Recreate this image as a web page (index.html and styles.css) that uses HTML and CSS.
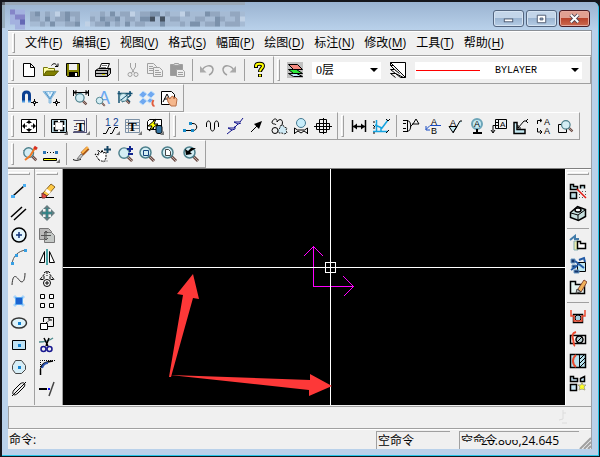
FILE: index.html
```html
<!DOCTYPE html>
<html lang="zh-CN">

<head>
    <meta charset="UTF-8">
    <meta name="viewport" content="width=device-width, initial-scale=1.0">
    <title>CAD</title>
    <link rel="stylesheet" href="styles.css">
</head>

<body>
    <!-- shared icon parts -->
    <svg class="defs" aria-hidden="true">
        <symbol id="lens" viewBox="0 0 18 18">
            <path d="M11 11l5 5" stroke="#6b4a42" stroke-width="3" />
            <path d="M11 11l5 5" stroke="#b9a9a5" />
            <circle cx="7.500" cy="7.500" r="5.500" fill="#d3edf4" stroke="#4c7f8b" stroke-width="1.500" />
        </symbol>
        <symbol id="dd" viewBox="0 0 18 18">
            <path d="M18 14v4h-4z" fill="#777" stroke="none" />
        </symbol>
    </svg>

    <div class="window">
        <header class="titlebar">
            <svg class="mosaic" width="246" height="28" aria-hidden="true">
                <path d="M0 0h243v3h-243z" fill="#9aa9b9" />
                <path d="M0 0h3v26h-3z" fill="#98aebe" />
                <path d="M0 0h3v3h-3z" fill="#626970" />
                <g fill="none" stroke-width="5">
                    <path d="M8 10h15M8 15h15M8 20h15M13 25h10" stroke="#a3b1df" />
                    <path d="M8 10h5M13 15h5M18 15h5M18 20h5" stroke="#8585c8" />
                    <path d="M18 20h5" stroke="#6469b4" />
                    <path d="M28 12h50M88 12h155M28 17h50M88 17h155M28 22h50M88 22h155" stroke="#a6bbd4" />
                    <path d="M28 12h5M43 12h5M58 12h5M68 12h10M98 12h5M118 12h10M138 12h10M163 12h5M183 12h5M208 12h10M228 12h10M28 17h10M53 17h10M73 17h5M88 17h5M103 17h10M123 17h10M168 17h10M193 17h10M218 17h5M233 17h5M38 22h5M63 22h10M93 22h10M113 22h5M133 22h10M178 22h5M203 22h10M223 22h15" stroke="#93a7c0" />
                    <path d="M33 12h5M63 12h5M108 12h5M148 12h10M203 12h5M43 17h5M63 17h5M98 17h5M113 17h5M138 17h10M158 17h5M213 17h5M48 22h5M73 22h5M103 22h5M123 22h5M158 22h5M188 22h10M213 22h5" stroke="#7b91ab" />
                    <path d="M148 17h5M158 17h5" stroke="#465362" />
                    <path d="M53 12h5M128 12h5M178 12h5M238 17h5M83 22h5" stroke="#c0d1e5" />
                </g>
            </svg>
            <div class="win-bttns">
                <button type="button" class="win-bttn" aria-label="最小化"><svg viewBox="0 0 30 16"><rect x="10.500" y="8.500" width="9" height="3" fill="#fff" stroke="#4d5a70" /></svg></button>
                <button type="button" class="win-bttn" aria-label="最大化"><svg viewBox="0 0 30 16"><path d="M10.500 4.500h9v8h-9zM13.500 7.500h3v2h-3z" fill="#fff" fill-rule="evenodd" stroke="#4d5a70" /></svg></button>
                <button type="button" class="win-bttn win-close" aria-label="关闭"><svg viewBox="0 0 30 16"><path d="M11 4l8 8M19 4l-8 8" stroke="#4d4654" stroke-width="4" /><path d="M11 4l8 8M19 4l-8 8" stroke="#fff" stroke-width="2" /></svg></button>
            </div>
        </header>

        <div class="client">
            <nav class="menubar" aria-label="菜单">
                <button type="button">文件(<u>F</u>)</button>
                <button type="button">编辑(<u>E</u>)</button>
                <button type="button">视图(<u>V</u>)</button>
                <button type="button">格式(<u>S</u>)</button>
                <button type="button">幅面(<u>P</u>)</button>
                <button type="button">绘图(<u>D</u>)</button>
                <button type="button">标注(<u>N</u>)</button>
                <button type="button">修改(<u>M</u>)</button>
                <button type="button">工具(<u>T</u>)</button>
                <button type="button">帮助(<u>H</u>)</button>
            </nav>

            <!-- toolbars -->
            <div class="bar-row">
                <div class="toolbar">
                    <button type="button" class="tool" aria-label="新建"><svg viewBox="0 0 18 18"><path d="M3.500 2.500h7l4 4v9h-11zM10.500 2.500v4h4" fill="#fff" /></svg></button>
                    <button type="button" class="tool" aria-label="打开"><svg viewBox="0 0 18 18"><path d="M1.500 14.500v-8h4l1 1h6v3" fill="#ffffa0" stroke="#77770c" /><path d="M1.500 14.500l3-4.500h12l-4 4.500z" fill="#808000" stroke="#5b5b00" /><path d="M9.500 4.500c2-3 5-2 5.500 1M13 5.500h3v-3" /></svg></button>
                    <button type="button" class="tool" aria-label="保存"><svg viewBox="0 0 18 18"><path d="M2.500 2.500h13v13h-12l-1-1z" fill="#808000" /><path d="M5 3h8v6H5z" fill="#f0f0f0" stroke="none" /><path d="M5 11h9v5H5z" fill="#000" stroke="none" /><path d="M11 12h2v3h-2z" fill="#fff" stroke="none" /></svg></button>
                    <i class="sep"></i>
                    <button type="button" class="tool" aria-label="打印"><svg viewBox="0 0 18 18"><path d="M5.500 7.500l2-5h8l-2 5" fill="#fff" /><path d="M8 4.500h5M7 6.500h5" stroke="#777" /><path d="M1.500 9.500l3-2h12v5l-3 3h-12z" fill="#bbb" /><path d="M1.500 9.500h12v6M13.500 9.500l3-2M2 12.500h11" /><path d="M8 13.500h3" stroke="#cc0" /></svg></button>
                    <i class="sep"></i>
                    <button type="button" class="tool off" aria-label="剪切"><svg viewBox="0 0 18 18"><path d="M6.500 2v4l4 6M11.500 2v4l-4 6" /><circle cx="6" cy="13.500" r="2" /><circle cx="12" cy="13.500" r="2" /></svg></button>
                    <button type="button" class="tool off" aria-label="复制"><svg viewBox="0 0 18 18"><path d="M1.500 2.500h6l3 3v7h-9zM3 5.500h4M3 7.500h5M3 9.500h4" fill="#eee" /><path d="M7.500 6.500h6l3 3v6h-9zM9 9.500h4M9 11.500h6M9 13.500h6" fill="#eee" /></svg></button>
                    <button type="button" class="tool off" aria-label="粘贴"><svg viewBox="0 0 18 18"><path d="M2.500 3.500h12v11h-12z" fill="#999" /><path d="M5.500 4.500l1-2h4l1 2z" fill="#ddd" /><path d="M8.500 8.500h6l2 2v5h-8zM10 11.500h5M10 13.500h5" fill="#eee" /></svg></button>
                    <i class="sep"></i>
                    <button type="button" class="tool off" aria-label="撤销"><svg viewBox="0 0 18 18"><path d="M4 10c2-6 10-7 11-2 0 3-2 5-4 6" stroke-width="1.500" /><path d="M2 5v6.500h6.500z" fill="#aaa" stroke="none" /></svg></button>
                    <button type="button" class="tool off" aria-label="重做"><svg viewBox="0 0 18 18"><path d="M14 10C12 4 4 3 3 8c0 3 2 5 4 6" stroke-width="1.500" /><path d="M16 5v6.500H9.500z" fill="#aaa" stroke="none" /></svg></button>
                    <i class="sep"></i>
                    <button type="button" class="tool" aria-label="帮助"><svg viewBox="0 0 18 18"><path d="M6 7V5c0-3 7-3 7 0 0 2-3 3-3 6M10 13v3" stroke-width="4" /><path d="M6 6V5c0-3 7-3 7 0 0 2-3 3-3 5.500M10 13.500v2" stroke="#ff0" stroke-width="2" /></svg></button>
                </div>
                <div class="toolbar grow">
                    <button type="button" class="tool" aria-label="图层"><svg viewBox="0 0 18 18"><path d="M1 1h16v16H1z" fill="#c0c0c0" stroke="none" /><path d="M2.500 12.500h8l6 3h-9z" fill="#bfe6f8" /><path d="M2.500 8.500h8l6 4h-9z" fill="#2bea38" /><path d="M2.500 3.500h9l5 5h-9z" fill="#f58a80" /></svg></button>
                    <span class="combo layer"><select aria-label="当前图层"><option>0层</option></select></span>
                    <button type="button" class="tool" aria-label="线型"><svg viewBox="0 0 18 18"><path d="M1.500 1.500h15v15z" fill="#fff" /><path d="M1.500 4.500h3l4 4M1.500 8.500h4l5 4M1.500 12.500h5l8 4M1.500 1.500v3l4 4M1.500 8.500l10 8h5M1.500 12.500l5 4" /></svg></button>
                    <span class="combo linetype"><select aria-label="线型选择"><option>BYLAYER</option></select></span>
                </div>
            </div>

            <div class="bar-row">
                <div class="toolbar">
                    <button type="button" class="tool" aria-label="捕捉"><svg viewBox="0 0 18 18"><path d="M3.500 13V6c0-4 6-4 6 0v7" stroke="#0b3f91" stroke-width="3" /><path d="M2 12.500h3M8 12.500h3" stroke="#4b97de" stroke-width="2" /><path d="M14.500 10v7M11 13.500h7" /><path d="M13.500 12.500h2v2h-2z" fill="#fff" /></svg></button>
                    <button type="button" class="tool" aria-label="过滤"><svg viewBox="0 0 18 18"><path d="M1 2.500h13L9 10v4H7v-4z" fill="#a5d2ef" stroke="#8dbbdd" /><path d="M3 3l5 7M12 3l-4 7" stroke="#4d8ec2" /><path d="M6 3l2 4 2-4" stroke="#fff" /><path d="M14.500 10v7M11 13.500h7" /><path d="M13.500 12.500h2v2h-2z" fill="#fff" /></svg></button>
                    <i class="sep"></i>
                    <button type="button" class="tool" aria-label="测距"><svg viewBox="0 0 18 18"><path d="M1.500 1v6M16.500 1v6M2 3.500h14M4 1.500v4l-2-2zM14 1.500v4l2-2z" /><use href="#lens" x="2" y="3" width="14" height="14" /></svg></button>
                    <button type="button" class="tool" aria-label="查找文字"><svg viewBox="0 0 18 18"><text class="glyph sky" x="4" y="15" font-size="18">A</text><use href="#lens" x="1" y="7" width="11" height="11" /></svg></button>
                    <button type="button" class="tool" aria-label="检查"><svg viewBox="0 0 18 18"><path d="M1.500 4.500h15M3 2v12M14 2v6M5 4l9 9M15 6l-9 7" stroke="#155273" stroke-width="1.500" /><use href="#lens" x="2" y="3" width="13" height="13" /><path d="M5 11L15 3" stroke="#155273" /></svg></button>
                    <button type="button" class="tool" aria-label="块"><svg viewBox="0 0 18 18"><path d="M5 2l4 3-4 4-4-3zM13 2l4 3-4 4-4-3zM5 9l4 3-4 4-4-3zM12 9l3 2-3 3-3-2z" fill="#70a8f0" stroke="#b9dcfa" /><path d="M15.500 11c-2 3-1 6 1 6" stroke="#e05c3d" stroke-width="2" /></svg></button>
                    <button type="button" class="tool" aria-label="特性"><svg viewBox="0 0 18 18"><path d="M1.500 2.500h10l3 3v10h-13z" fill="#fff" /><path d="M3 13L7 5l3 6M4 10h4" /><path d="M7 8l1 5 3 4h5l1-7-2-2-1 2-1-3-2 1-1 2z" fill="#f5b78c" stroke="#b86f47" /></svg></button>
                </div>
            </div>

            <div class="bar-row">
                <div class="toolbar">
                    <button type="button" class="tool" aria-label="图幅设置"><svg viewBox="0 0 18 18"><path d="M1.500 2.500h15v13h-15z" fill="#fff" /><path d="M9 3l3 3H6zM9 15l3-3H6zM2 9l3-3v6zM16 9l-3-3v6z" fill="#000" stroke="none" /><path d="M9 5v2M9 11v2M5 9h2M11 9h2" /></svg></button>
                    <i class="sep"></i>
                    <button type="button" class="tool" aria-label="图框"><svg viewBox="0 0 18 18"><path d="M1.500 2.500h15v13h-15z" fill="#b8d7e2" /><path d="M4.500 4.500h9v9h-9z" fill="#fff" stroke-width="1.500" /><path d="M8 4h2M8 14h2M4 8v2M14 8v2" stroke="#fff" stroke-width="2" /><use href="#dd" width="18" height="18" /></svg></button>
                    <button type="button" class="tool" aria-label="标题栏"><svg viewBox="0 0 18 18"><path d="M1.500 3.500h11v11h-11M14.500 1v14M1 15.500h14M2 12.500h3M2 9.500h3" stroke="#557" /><text class="glyph serif" x="4" y="14" font-size="13" font-weight="bold">T</text><use href="#dd" width="18" height="18" /></svg></button>
                    <i class="sep"></i>
                    <button type="button" class="tool" aria-label="序号"><svg viewBox="0 0 18 18"><text class="glyph navy" x="3" y="9" font-size="10">1</text><text class="glyph navy" x="11" y="9" font-size="10">2</text><path d="M1 16.500h3l3-6h2M8 16.500h2l3-6h3" /><use href="#dd" width="18" height="18" /></svg></button>
                    <button type="button" class="tool" aria-label="明细表"><svg viewBox="0 0 18 18"><path d="M1.500 2.500h14v13h-14zM1 5.500h15M1 8.500h15M1 11.500h15M4.500 3v12" stroke="#7d91a5" /><text class="glyph serif" x="4" y="14" font-size="13" font-weight="bold">T</text><use href="#dd" width="18" height="18" /></svg></button>
                    <button type="button" class="tool" aria-label="数据"><svg viewBox="0 0 18 18"><path d="M1.500 4.500l2-2h12v10h-14zM1 8.500h14M7.500 3v10" fill="#fff" /><path d="M10 2L2 9h4l-3 5 9-7H8z" fill="#ff0" /><path d="M10 10c0-2 6-2 6 0v5c0 2-6 2-6 0z" fill="#3575a2" /><use href="#dd" width="18" height="18" /></svg></button>
                </div>
                <div class="toolbar">
                    <button type="button" class="tool" aria-label="多段线"><svg viewBox="0 0 18 18"><path d="M2 13.500h9c5 0 5-7 0-7H8" /><path d="M1 12h3v3H1zM7 5h3v3H7zM9 12h3v3H9z" fill="#168cc9" stroke="none" /></svg></button>
                    <button type="button" class="tool" aria-label="波浪线"><svg viewBox="0 0 18 18"><path d="M2.500 10V7c0-4 4-4 4 0v4c0 4 4 4 4 0V7c0-4 4-4 4 0v3" /></svg></button>
                    <button type="button" class="tool" aria-label="双折线"><svg viewBox="0 0 18 18"><path d="M1 17l5-4-4-2h6l4-4-4-2h6l3-4M6 13l3-1 0-3M12 7l3-1" stroke="#11128c" /></svg></button>
                    <button type="button" class="tool" aria-label="箭头"><svg viewBox="0 0 18 18"><path d="M3 15l7-7" /><path d="M14 4l-3 8-5-5z" fill="#000" stroke="none" /></svg></button>
                    <button type="button" class="tool" aria-label="齿轮"><svg viewBox="0 0 18 18"><path d="M2 5c2-5 6-3 5 0 2-4 7-3 5 3M2 5c0 3 3 1 4 3" /><circle cx="5" cy="13.500" r="3" /><path d="M10 9l3-1 1 2 3 1-1 2 1 3-3 1-2-1-3 0-1-3 2-2z" fill="#cfeaf5" stroke="#222" stroke-dasharray="2 1" /></svg></button>
                    <button type="button" class="tool" aria-label="局部放大"><svg viewBox="0 0 18 18"><circle cx="9" cy="6" r="4.500" fill="#c6ecfa" stroke="#457b92" /><path d="M2.500 17v-6l3 2h7l3-2v6M3 16l3-2 3 2 3-2 3 2" /></svg></button>
                    <button type="button" class="tool" aria-label="孔轴"><svg viewBox="0 0 18 18"><path d="M5.500 2.500h7v13h-7zM2.500 6.500h13v6h-13zM0 9.500h18M9.500 1v16" /></svg></button>
                </div>
                <div class="toolbar">
                    <button type="button" class="tool" aria-label="尺寸标注"><svg viewBox="0 0 18 18"><path d="M2.500 3v12M15.500 3v12M3 9.500h12" stroke-width="1.500" /><path d="M3 9.500l4-3v6zM15 9.500l-4-3v6z" fill="#000" stroke="none" /></svg></button>
                    <button type="button" class="tool" aria-label="坐标标注"><svg viewBox="0 0 18 18"><path d="M4.500 3v12M1 14.500h15M3 8l7 3 6-8M9 11v3" stroke="#16a3df" stroke-width="1.500" /><path d="M1 5h2M1 8l2 2M1 11h2M1 16h2M14 2l2 2 2-2M14 16l3-3" /></svg></button>
                    <i class="sep"></i>
                    <button type="button" class="tool" aria-label="倒角标注"><svg viewBox="0 0 18 18"><path d="M1 3.500h4c5 0 5 11 0 11H1M1 6.500h3M1 11.500h3M5.500 3v12M8 10l3-3 3-5 3 5h-7" /></svg></button>
                    <button type="button" class="tool" aria-label="引出说明"><svg viewBox="0 0 18 18"><text class="glyph" x="7" y="8" font-size="9">A</text><text class="glyph" x="7" y="17" font-size="9">B</text><path d="M17 8.500H6l-4 4M2 9v4h4" stroke="#164ac3" /></svg></button>
                    <button type="button" class="tool" aria-label="粗糙度"><svg viewBox="0 0 18 18"><text class="glyph" x="4" y="9" font-size="9">A</text><path d="M3 9.500h8l-4 6zM7 16l7-12h2" fill="#c5eaf3" /></svg></button>
                    <button type="button" class="tool" aria-label="基准代号"><svg viewBox="0 0 18 18"><circle cx="9" cy="7" r="5" fill="#c5eaf3" stroke="#6da5b8" stroke-width="2" /><text class="glyph" x="6" y="10" font-size="9">A</text><path d="M9 12v4M5 16h9" stroke-width="2" /></svg></button>
                    <button type="button" class="tool" aria-label="形位公差"><svg viewBox="0 0 18 18"><path d="M5.500 2.500h11v9h-11zM8.500 3v8M6 5.500h3M6 8.500h3M5 8.500H3v7M1 13l2 3 2-3" /><text class="glyph" x="10" y="10" font-size="8">A</text></svg></button>
                    <button type="button" class="tool" aria-label="焊接符号"><svg viewBox="0 0 18 18"><path d="M2 5.500h3v7h8v4H2z" fill="#c5eaf3" stroke-width="1.500" /><path d="M6 11l6-7h2l2-2M14 4l2 2M6 8v3h3" /></svg></button>
                    <button type="button" class="tool" aria-label="剖切符号"><svg viewBox="0 0 18 18"><path d="M3.500 7V3.500H7M3.500 11v4H7M6 2l2 1.500L6 5M6 13l2 2-2 2" /><text class="glyph" x="10" y="8" font-size="9">A</text><text class="glyph" x="10" y="17" font-size="9">A</text></svg></button>
                    <button type="button" class="tool" aria-label="局部查看"><svg viewBox="0 0 18 18"><path d="M2.500 7.500h8v8h-8z" /><use href="#lens" x="4" y="2" width="14" height="14" /></svg></button>
                </div>
            </div>

            <div class="bar-row">
                <div class="toolbar">
                    <button type="button" class="tool" aria-label="重画"><svg viewBox="0 0 18 18"><path d="M3 5l2 2" stroke="#aaa" /><use href="#lens" x="2" y="1" width="16" height="16" /><path d="M15 3l-5 8-5 4" stroke="#ef7a27" stroke-width="2" /><path d="M14 2l3 2" stroke="#d73020" stroke-width="3" /></svg></button>
                    <button type="button" class="tool" aria-label="线宽"><svg viewBox="0 0 18 18"><path d="M2 7.500h13" stroke-dasharray="1 2" /><path d="M1 6h3v3H1zM13 6h3v3h-3z" fill="#2b74b4" stroke="none" /><path d="M1.500 13.500h13v2h-13z" fill="#ff0" /><use href="#dd" width="18" height="18" /></svg></button>
                    <i class="sep"></i>
                    <button type="button" class="tool" aria-label="画笔"><svg viewBox="0 0 18 18"><path d="M1 14.500c4 2 6 0 8 0" /><path d="M5 14l4-5 2 1-3 4z" fill="#ccc" stroke="#777" /><path d="M10 9l6-6" stroke="#a35519" stroke-width="4" /><path d="M10 8l6-6" stroke="#ffb64b" stroke-width="2" /></svg></button>
                    <button type="button" class="tool" aria-label="平移"><svg viewBox="0 0 18 18"><path d="M5 15L1 9l4 1-1-5 3 3 1-3 1 3 3-1v6l-2 4z" fill="#fff" stroke-dasharray="2 1" /><path d="M13.500 1v7M10 4.500h7" stroke="#174664" stroke-width="2" /><path d="M7 16h7" stroke="#999" /></svg></button>
                    <button type="button" class="tool" aria-label="动态缩放"><svg viewBox="0 0 18 18"><use href="#lens" width="17" height="17" x="1" y="1" /><path d="M14 1v6M11 4h6M12 9h5" stroke="#11268e" stroke-width="2" /></svg></button>
                    <button type="button" class="tool" aria-label="窗口缩放"><svg viewBox="0 0 18 18"><use href="#lens" width="18" height="18" /><path d="M5.500 5.500h5v5h-5z" stroke="#12427c" /></svg></button>
                    <button type="button" class="tool" aria-label="显示全部"><svg viewBox="0 0 18 18"><use href="#lens" width="18" height="18" /><path d="M5.500 4.500h3l2 2v4h-5z" fill="#fff" stroke="#444" /></svg></button>
                    <button type="button" class="tool" aria-label="显示回溯"><svg viewBox="0 0 18 18"><use href="#lens" width="18" height="18" /><path d="M3 4l1 6 6-1-2-2 6-4H9L6 6z" fill="#000" stroke="none" /></svg></button>
                </div>
            </div>

            <!-- drawing area with side palettes -->
            <main class="work">
                <div class="palette">
                    <button type="button" class="tool" aria-label="直线"><svg viewBox="0 0 18 18"><path d="M3 14L14 4" stroke-width="1.500" /><path d="M1 13h4v3H1zM13 2h3v3h-3z" fill="#4aaef2" stroke="none" /></svg></button>
                    <button type="button" class="tool" aria-label="平行线"><svg viewBox="0 0 18 18"><path d="M1 13L12 3M4 16L16 5" stroke-width="1.500" /></svg></button>
                    <button type="button" class="tool" aria-label="圆"><svg viewBox="0 0 18 18"><circle cx="9" cy="9" r="7" fill="#e4f6fd" stroke-width="1.500" /><path d="M9 6v6M6 9h6" stroke="#12347b" stroke-width="1.500" /></svg></button>
                    <button type="button" class="tool" aria-label="圆弧"><svg viewBox="0 0 18 18"><path d="M2 16C3 8 8 3 16 2" stroke="#555" /><path d="M1 14h3v3H1zM5 6h3v3H5zM14 1h3v3h-3z" fill="#379fe3" stroke="none" /></svg></button>
                    <button type="button" class="tool" aria-label="样条"><svg viewBox="0 0 18 18"><path d="M2 15C3 0 8 9 10 11s5 1 5-8" stroke="#333" /></svg></button>
                    <button type="button" class="tool" aria-label="点"><svg viewBox="0 0 18 18"><path d="M4 4l10 10M14 4L4 14" stroke="#a9d5fa" stroke-width="3" /><path d="M5.500 5.500h7v7h-7z" fill="#1a63d0" stroke="#5da9ee" /></svg></button>
                    <button type="button" class="tool" aria-label="椭圆"><svg viewBox="0 0 18 18"><ellipse cx="9" cy="9" rx="7.500" ry="5" fill="#def3fb" stroke="#333" stroke-width="1.500" /><path d="M8 8h3v3H8z" fill="#1684d2" stroke="none" /></svg></button>
                    <button type="button" class="tool" aria-label="矩形"><svg viewBox="0 0 18 18"><path d="M2.500 4.500h13v9h-13z" fill="#bfe2f4" /><path d="M8 8h3v3H8z" fill="#1684d2" stroke="none" /></svg></button>
                    <button type="button" class="tool" aria-label="多边形"><svg viewBox="0 0 18 18"><path d="M5.500 2.500h6l4 5v4l-4 4h-6l-3-4v-4z" fill="#d6eef7" stroke="#444" /><path d="M8 8h3v3H8z" fill="#1684d2" stroke="none" /></svg></button>
                    <button type="button" class="tool" aria-label="中心线"><svg viewBox="0 0 18 18"><path d="M2 16L16 2M4 10l6-6c4-3 6 0 4 3l-6 6c-4 4-7 1-4-3z" /></svg></button>
                </div>
                <div class="palette">
                    <button type="button" class="tool" aria-label="删除"><svg viewBox="0 0 18 18"><path d="M1 15.500h15" /><path d="M5 11l8-9 4 3-8 9z" fill="#ffca45" stroke="#876325" /><path d="M4 11l5 3-2 2H4z" fill="#ef4b3e" stroke="#733" /><path d="M8 8l4 3" stroke="#fff" stroke-width="3" /></svg></button>
                    <button type="button" class="tool" aria-label="平移图形"><svg viewBox="0 0 18 18"><path d="M9 3v12M3 9h12" stroke="#657c80" stroke-width="3" /><path d="M9 1l4 4H5zM9 17l4-4H5zM1 9l4-4v8zM17 9l-4-4v8z" fill="#657c80" stroke="none" /><path d="M9 4v10M4 9h10" stroke="#16898b" /></svg></button>
                    <button type="button" class="tool" aria-label="复制移动"><svg viewBox="0 0 18 18"><path d="M1.500 2.500h9l3 3v8h-12z" fill="#bbb" stroke="#777" /><path d="M6.500 6.500h7l3 3v7h-10z" fill="#c4c8c6" stroke="#777" /><path d="M8 5v9M3 9.500h10M6 7l2-2 2 2M6 12l2 2 2-2" stroke="#555" /></svg></button>
                    <button type="button" class="tool" aria-label="镜像"><svg viewBox="0 0 18 18"><path d="M1.500 14.500l5-11v11zM16.500 14.500l-5-11v11z" fill="#fff" /><path d="M9 1v16" stroke="#13888b" stroke-width="1.500" /></svg></button>
                    <button type="button" class="tool" aria-label="旋转"><svg viewBox="0 0 18 18"><path d="M2 9.500l4-5v5zM16 9.500l-4-5v5zM6 3c2-2 5-2 6 0M9 1v5" stroke-dasharray="3 1" /><circle cx="9" cy="13" r="3.500" fill="#fff" /><path d="M7 13h4M9 11v4" /></svg></button>
                    <button type="button" class="tool" aria-label="阵列"><svg viewBox="0 0 18 18"><path d="M2.500 2.500h4v4h-4zM11.500 2.500h4v4h-4zM2.500 11.500h4v4h-4zM11.500 11.500h4v4h-4z" fill="#fff" /></svg></button>
                    <button type="button" class="tool" aria-label="比例缩放"><svg viewBox="0 0 18 18"><path d="M5.500 8V3.500h10v9H10" /><path d="M2.500 9.500h7v6h-7z" fill="#fff" /><path d="M8 9l5-4M10 5h3v3" stroke-dasharray="2 1" /></svg></button>
                    <button type="button" class="tool" aria-label="裁剪"><svg viewBox="0 0 18 18"><path d="M1 6c5 0 10-1 14-4" stroke="#4d8b8d" stroke-width="1.500" /><path d="M6 2l4 8M11 2l-3 8" stroke-width="1.500" /><circle cx="5.500" cy="13" r="2.500" stroke="#17178f" stroke-width="1.500" /><circle cx="11.500" cy="13" r="2.500" stroke="#17178f" stroke-width="1.500" /></svg></button>
                    <button type="button" class="tool" aria-label="过渡"><svg viewBox="0 0 18 18"><path d="M2.500 17V2.500H17" stroke-dasharray="1 1" /><path d="M2.500 17v-6M3 10c1-4 3-6 12-7" stroke-width="1.500" /><path d="M4 10c1-3 3-5 6-5" stroke="#2a52ae" stroke-width="2" /></svg></button>
                    <button type="button" class="tool" aria-label="齐边"><svg viewBox="0 0 18 18"><path d="M1 9h8" stroke-width="2" /><path d="M10 9h2" stroke="#11f" stroke-width="2" /><path d="M11 16l5-14" stroke="#444" stroke-width="1.500" /></svg></button>
                </div>
                <!-- crosshair, axes and the two pointing arrows -->
                <svg class="canvas" role="img" aria-label="绘图区">
                    <g class="axes">
                        <path d="M250.500 117.500v-40M240.500 87.500l10-10 10 10M250.500 117.500h40M280.500 107.500l10 10-10 10" />
                    </g>
                    <g class="cross">
                        <line x1="0" y1="98.500" x2="100%" y2="98.500" />
                        <line x1="267.500" y1="0" x2="267.500" y2="100%" />
                        <rect x="262.500" y="93.500" width="10" height="10" />
                    </g>
                    <g class="pointer">
                        <path d="M106 208l14-82-6-1 16-20 6 25-6-1-22 79z" />
                        <path d="M107 206l140 5v-6l22 12-23 10v-6z" />
                    </g>
                </svg>
                <div class="palette right">
                    <button type="button" class="tool" aria-label="块创建"><svg viewBox="0 0 18 18"><path d="M1.500 2.500h3v2h4v3h-7zM11.500 6.500v-3h4v3M1.500 10.500h6v6h-6z" fill="#bddce3" stroke-width="1.500" /><path d="M10 9.500h7M10 12.500h7M10 15.500h7" stroke="#555" stroke-dasharray="1 2" /><path d="M8 7l9 9" stroke="#e01a14" stroke-width="1.500" /></svg></button>
                    <button type="button" class="tool" aria-label="图库"><svg viewBox="0 0 18 18"><path d="M1.500 8.500l7-6 8 3v7l-7 4-8-3z" fill="#c7dfde" stroke-width="1.500" /><path d="M2 9l7 2 7-5M9 11v6" /><ellipse cx="9" cy="6" rx="3" ry="2" fill="#fff" stroke-width="1.500" /></svg></button>
                    <i class="sep"></i>
                    <button type="button" class="tool" aria-label="块编辑"><svg viewBox="0 0 18 18"><path d="M5 7h4v9H5z" fill="#e9edae" stroke="#85aeb1" /><path d="M8.500 7.500h3v2h5v5h-8z" fill="#fff" stroke-width="1.500" /><path d="M1 6l5-4v3h4" stroke="#437caa" stroke-width="2" /></svg></button>
                    <button type="button" class="tool" aria-label="块消隐"><svg viewBox="0 0 18 18"><path d="M8.500 6.500h8v9h-8z" fill="#bfe6f0" /><path d="M2 3h4v4H2zM3 9h4v3H3zM5 14h5v3H5z" fill="#13346b" stroke="#6b9ac5" /><path d="M6 5l9 7M10 4l5-2 1 4M2 14l7-5" stroke="#225aa5" stroke-width="2" /></svg></button>
                    <button type="button" class="tool" aria-label="块删除"><svg viewBox="0 0 18 18"><path d="M1.500 3.500h5v3h9v9h-14z" fill="#e6f3f0" stroke-width="1.500" /><path d="M9 11l6-9 3 2-6 10z" fill="#f0b15a" stroke="#884b35" /><path d="M8 11l4 3-5 1z" fill="#bbb" stroke="#444" /></svg></button>
                    <i class="sep"></i>
                    <button type="button" class="tool" aria-label="图符"><svg viewBox="0 0 18 18"><path d="M4.500 6.500h9v8h-9z" fill="#fff" stroke-width="1.500" /><circle cx="9" cy="10" r="3" fill="#a6d0df" /><path d="M2 2v6h3v5h8V8h3V2" stroke="#eb4a2f" stroke-width="1.500" /></svg></button>
                    <button type="button" class="tool" aria-label="驱动"><svg viewBox="0 0 18 18"><path d="M1.500 5.500h15v8h-15z" fill="#fff" stroke-width="1.500" /><circle cx="10.500" cy="9.500" r="3.500" fill="#b9cdd1" stroke-width="1.500" /><path d="M8 12l5-5" /><path d="M7 2c-4 1-4 4-3 7s0 6 2 7" stroke="#eb4a2f" stroke-width="2" /></svg></button>
                    <button type="button" class="tool" aria-label="填充"><svg viewBox="0 0 18 18"><path d="M1.500 2.500h15v13h-15z" fill="#b8e2ee" stroke-width="1.500" /><path d="M10.500 3v12M11 7l5-5M11 11l5-5M11 15l5-5" /><path d="M7 3c-4 3-4 9 0 12" stroke="#e84b2d" stroke-width="2" /></svg></button>
                    <button type="button" class="tool" aria-label="打散"><svg viewBox="0 0 18 18"><path d="M1.500 2.500h3v2h4v3h-7zM11.500 7.500v-3l4-2v5zM1.500 10.500h6v6h-6z" fill="#c9e6f4" stroke-width="1.500" /><path d="M13 8l1 3 3 0-2 2 1 3-3-1-3 1 1-3-2-2h3z" fill="#ff2" stroke="#aa8" /></svg></button>
                </div>
            </main>

            <div class="command">
                <svg width="12" height="20" aria-hidden="true"><path d="M6 3v9l-4 1M6 6h3M5 16h5" /></svg>
            </div>
            <footer class="status">
                <span class="prompt">命令:</span>
                <span class="pane">空命令</span>
                <span class="pane wide"><span class="cut">空命令</span><span class="coords"><span>20.806</span>,24.645</span></span>
                <svg class="grip" width="12" height="12" aria-hidden="true"><path d="M1 12L12 1M5 12l7-7M9 12l3-3" /></svg>
            </footer>
        </div>
    </div>
</body>

</html>
```

FILE: styles.css
```css
*,
*::before,
*::after {
    box-sizing: border-box;
}

body {
    margin: 0;
    min-height: 100vh;
    display: flex;
    background-color: #15161c;
    font-family: "Open Sans", "Noto Sans CJK SC", sans-serif;
    font-size: 12px;
    color: #000;
}

button {
    margin: 0;
    padding: 0;
    border: 0;
    background: none;
    font: inherit;
    color: inherit;
}

.defs {
    position: absolute;
    width: 0;
    height: 0;
}

.window {
    flex: 1;
    display: flex;
    flex-direction: column;
    margin: 2px 1px 1px 2px;
    padding: 0 6px 6px 6px;
    background-color: #b9d1ea;
    border-right: 1px solid #25c5e8;
    border-bottom: 1px solid #25c5e8;
    border-top-right-radius: 6px;
}

/* title bar */

.titlebar {
    display: flex;
    justify-content: space-between;
    height: 28px;
    margin: 0 -6px;
    background: linear-gradient(#9ab3d1, #b9d1ea);
    border-top-right-radius: 5px;
}

.win-bttns {
    display: flex;
    gap: 2px;
    padding: 8px 8px 0 0;
}

.win-bttn {
    width: 31px;
    height: 17px;
    background: linear-gradient(#c3d5e9 45%, #9bb5d2 50%, #b6cde5);
    border: 1px solid #53657f;
    border-radius: 3px;
    box-shadow: inset 0 0 0 1px #d5e3f2;
}

.win-bttn svg {
    display: block;
    width: 29px;
    height: 15px;
}

.win-close {
    background: linear-gradient(#e0a092 45%, #b8442d 50%, #cc6a50);
    border-color: #4a1c24;
    box-shadow: inset 0 0 0 1px #e5aa9f;
}

.client {
    flex: 1;
    display: flex;
    flex-direction: column;
    background-color: #f0f0f0;
    border-top: 1px solid #8a8f96;
    border-right: 1px solid #9aa0a8;
}

/* menu */

.menubar {
    display: flex;
    gap: 10px;
    height: 25px;
    padding-left: 4px;
    border-bottom: 1px solid #a0a0a0;
    box-shadow: inset 0 1px #fff;
}

.menubar::before {
    content: "";
    width: 3px;
    height: 20px;
    margin-top: 2px;
    border: 1px solid #fff;
    border-right-color: #a0a0a0;
    border-bottom-color: #a0a0a0;
}

.menubar button {
    white-space: nowrap;
    line-height: 24px;
}

.menubar u {
    text-underline-offset: 2px;
}

/* toolbars */

.bar-row {
    display: flex;
    height: 28px;
}

.toolbar {
    display: flex;
    align-items: center;
    padding: 0 3px;
    border-top: 1px solid #fff;
    border-right: 1px solid #a0a0a0;
    border-bottom: 1px solid #a0a0a0;
}

.toolbar::before {
    content: "";
    width: 3px;
    height: 22px;
    margin-right: 4px;
    border: 1px solid #fff;
    border-right-color: #a0a0a0;
    border-bottom-color: #a0a0a0;
}

.grow {
    flex: 1;
}

.tool {
    flex: none;
    display: grid;
    place-items: center;
    width: 22px;
    height: 22px;
}

.tool svg {
    width: 18px;
    height: 18px;
    fill: none;
    stroke: #000;
}

.off svg {
    stroke: #a0a0a0;
}

.glyph {
    font-family: "Liberation Sans", sans-serif;
    fill: #000;
    stroke: none;
}

.sky {
    fill: #6ba9f2;
}

.navy {
    fill: #123f91;
}

.serif {
    font-family: "Liberation Serif", serif;
}

.sep {
    flex: none;
    width: 1px;
    height: 22px;
    margin: 0 3px 0 4px;
    background-color: #a0a0a0;
}

/* drop-downs */

.combo {
    display: grid;
    align-items: center;
    background-color: #fff;
}

.combo select,
.combo::after {
    grid-area: 1 / 1;
}

.combo select {
    width: 100%;
    height: 17px;
    padding: 0 16px 0 4px;
    border: 0;
    appearance: none;
    background: none;
    color: #000;
    font-family: "Liberation Serif", "Noto Sans CJK SC", serif;
    font-size: 12px;
}

.combo::after {
    content: "";
    justify-self: end;
    margin-right: 3px;
    border: 4px solid transparent;
    border-top-color: #000;
    border-bottom: 0;
    pointer-events: none;
}

.layer {
    width: 69px;
    margin: 0 6px;
}

.linetype {
    flex: 1;
    margin: 0 5px 0 6px;
}

.linetype select {
    padding-left: 80px;
    background: linear-gradient(#f00, #f00) no-repeat 1px 8px / 64px 1px;
    font-family: "Liberation Mono", monospace;
    font-size: 10px;
}

/* work area */

.work {
    flex: 1;
    display: flex;
    min-height: 237px;
    border-top: 1px solid #808080;
}

.palette {
    flex: none;
    display: flex;
    flex-direction: column;
    align-items: center;
    width: 27px;
    padding: 3px 4px 0 0;
    border-right: 1px solid #a0a0a0;
    box-shadow: inset 0 1px #fff;
}

.palette + .palette {
    width: 28px;
    padding-left: 1px;
}

.palette::before {
    content: "";
    width: 22px;
    height: 3px;
    margin-bottom: 5px;
    border: 1px solid #fff;
    border-right-color: #a0a0a0;
    border-bottom-color: #a0a0a0;
}

.palette .sep {
    width: 22px;
    height: 1px;
    margin: 4px 0 3px 0;
}

.right {
    width: 26px;
    padding-right: 1px;
    border-right: 0;
    border-left: 1px solid #fff;
}

.canvas {
    flex: 1;
    width: 0;
    min-width: 0;
    background-color: #000;
    shape-rendering: crispEdges;
}

.axes {
    fill: none;
    stroke: #f0f;
}

.cross {
    fill: none;
    stroke: #fff;
}

.pointer {
    fill: #fd3838;
    shape-rendering: auto;
}

/* command line and status bar */

.command {
    display: flex;
    justify-content: flex-end;
    height: 23px;
    margin-top: 1px;
    padding-right: 22px;
    border: 1px solid #a0a0a0;
    border-right: 0;
}

.command svg {
    fill: none;
    stroke: #dcdcdc;
}

.status {
    display: flex;
    height: 20px;
    padding: 1px 0 0 1px;
    border-top: 1px solid #fff;
    line-height: 17px;
}

.prompt {
    flex: 1;
}

.pane {
    width: 74px;
    margin-right: 9px;
    padding-left: 1px;
    border-top: 1px solid #a0a0a0;
    border-left: 1px solid #a0a0a0;
    white-space: nowrap;
}

.wide {
    position: relative;
    width: 120px;
    margin-right: 0;
}

.cut {
    display: inline-block;
    clip-path: inset(0 0 7px 0);
}

/* coordinate read-out lies over the pane's own label */
.coords {
    position: absolute;
    left: 21px;
    top: 0;
}

.coords span {
    display: inline-block;
    clip-path: inset(8px 0 0 0);
}

.grip {
    align-self: flex-end;
    fill: none;
    stroke: #a0a0a0;
    stroke-width: 2;
}
```
